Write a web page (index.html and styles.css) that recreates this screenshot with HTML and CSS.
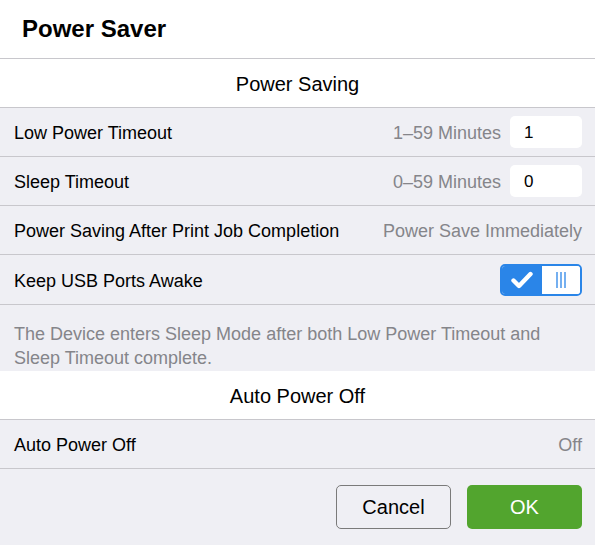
FILE: index.html
```html
<!DOCTYPE html>
<html>
<head>
<meta charset="utf-8">
<link rel="stylesheet" href="styles.css">
</head>
<body>
<div class="dialog">
  <div class="header">Power Saver</div>
  <div class="section">Power Saving</div>
  <div class="row">
    <span class="label">Low Power Timeout</span>
    <span class="right"><span class="hint">1–59 Minutes</span><span class="input">1</span></span>
  </div>
  <div class="row">
    <span class="label">Sleep Timeout</span>
    <span class="right"><span class="hint">0–59 Minutes</span><span class="input">0</span></span>
  </div>
  <div class="row">
    <span class="label">Power Saving After Print Job Completion</span>
    <span class="value">Power Save Immediately</span>
  </div>
  <div class="row row-tall">
    <span class="label">Keep USB Ports Awake</span>
    <span class="toggle">
      <span class="toggle-on"><svg width="22" height="18" viewBox="0 0 22 18"><path d="M2.5 9.5 L8 15 L19.5 3" fill="none" stroke="#fff" stroke-width="4.4" stroke-linecap="round" stroke-linejoin="round"/></svg></span>
      <span class="toggle-off"><svg width="10" height="16" viewBox="0 0 10 16"><path d="M1 0V16M5 0V16M9 0V16" stroke="#2a85e8" stroke-width="1.3"/></svg></span>
    </span>
  </div>
  <div class="note">The Device enters Sleep Mode after both Low Power Timeout and Sleep Timeout complete.</div>
  <div class="section">Auto Power Off</div>
  <div class="row">
    <span class="label">Auto Power Off</span>
    <span class="value">Off</span>
  </div>
  <div class="footer">
    <button class="btn cancel">Cancel</button>
    <button class="btn ok">OK</button>
  </div>
</div>
</body>
</html>
```
FILE: styles.css
```css
html, body {
  margin: 0;
  padding: 0;
  background: #efeff4;
}
.dialog {
  width: 595px;
  height: 545px;
  font-family: "Liberation Sans", Arial, sans-serif;
  color: #000;
  background: #efeff4;
  overflow: hidden;
}
.header {
  background: #fff;
  border-bottom: 1px solid #c8c7cc;
  box-sizing: border-box;
  height: 59px;
  padding-left: 22px;
  font-size: 24px;
  font-weight: bold;
  line-height: 58px;
}
.section {
  height: 49px;
  box-sizing: border-box;
  background: #fff;
  border-bottom: 1px solid #c8c7cc;
  text-align: center;
  font-size: 20px;
  line-height: 50px;
}
.row {
  height: 49px;
  box-sizing: border-box;
  border-bottom: 1px solid #c8c7cc;
  display: flex;
  align-items: center;
  justify-content: space-between;
  padding: 0 13px 0 14px;
  font-size: 18px;
}
.row-tall {
  height: 50px;
}
.label, .hint, .value {
  padding-top: 3px;
}
.right {
  display: flex;
  align-items: center;
  gap: 9px;
}
.hint, .value {
  color: #85858a;
}
.input {
  width: 72px;
  height: 32px;
  box-sizing: border-box;
  background: #fff;
  border-radius: 5px;
  padding-left: 14px;
  line-height: 33px;
  font-size: 17px;
}
.toggle {
  display: flex;
  width: 82px;
  height: 32px;
  box-sizing: border-box;
  border: 2px solid #2a85e8;
  border-radius: 5px;
  overflow: hidden;
}
.toggle-on {
  width: 40px;
  background: #2a85e8;
  display: flex;
  align-items: center;
  justify-content: center;
}
.toggle-off {
  flex: 1;
  background: #fff;
  display: flex;
  align-items: center;
  justify-content: center;
}
.note {
  height: 66px;
  box-sizing: border-box;
  padding: 17px 14px 0 14px;
  font-size: 18px;
  line-height: 24px;
  color: #85858a;
}
.footer {
  display: flex;
  justify-content: flex-end;
  gap: 16px;
  padding: 16px 13px 0 0;
}
.btn {
  width: 115px;
  height: 44px;
  border-radius: 5px;
  font-family: "Liberation Sans", Arial, sans-serif;
  font-size: 20px;
  cursor: pointer;
}
.cancel {
  background: #efeff4;
  border: 1px solid #7a7a7a;
  color: #000;
}
.ok {
  background: #52a52e;
  border: none;
  color: #fff;
}
```
